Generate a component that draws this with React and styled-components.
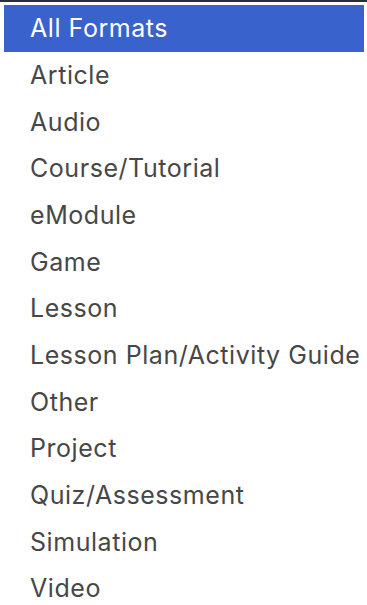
import React from "react";
import styled, { createGlobalStyle } from "styled-components";

const Global = createGlobalStyle`
  html, body { margin: 0; padding: 0; background: #fff; }
  body { font-family: Inter, "Noto Sans", sans-serif; }
`;

const List = styled.ul`
  list-style: none;
  margin: 0;
  padding: 3px 3px 0 4px;
  border-top: 2px solid #2a2d3a;
`;

const Item = styled.li`
  height: 46.67px;
  display: flex;
  align-items: center;
  padding-left: 26px;
  font-size: 25px;
  letter-spacing: 0.55px;
  color: ${(p) => (p.$active ? "#ffffff" : "#474747")};
  background: ${(p) => (p.$active ? "#3a62cc" : "transparent")};
  white-space: nowrap;
`;

const items = [
  "All Formats",
  "Article",
  "Audio",
  "Course/Tutorial",
  "eModule",
  "Game",
  "Lesson",
  "Lesson Plan/Activity Guide",
  "Other",
  "Project",
  "Quiz/Assessment",
  "Simulation",
  "Video",
];

export default function App() {
  return (
    <>
      <Global />
      <List>
        {items.map((t, i) => (
          <Item key={t} $active={i === 0}>
            {t}
          </Item>
        ))}
      </List>
    </>
  );
}
